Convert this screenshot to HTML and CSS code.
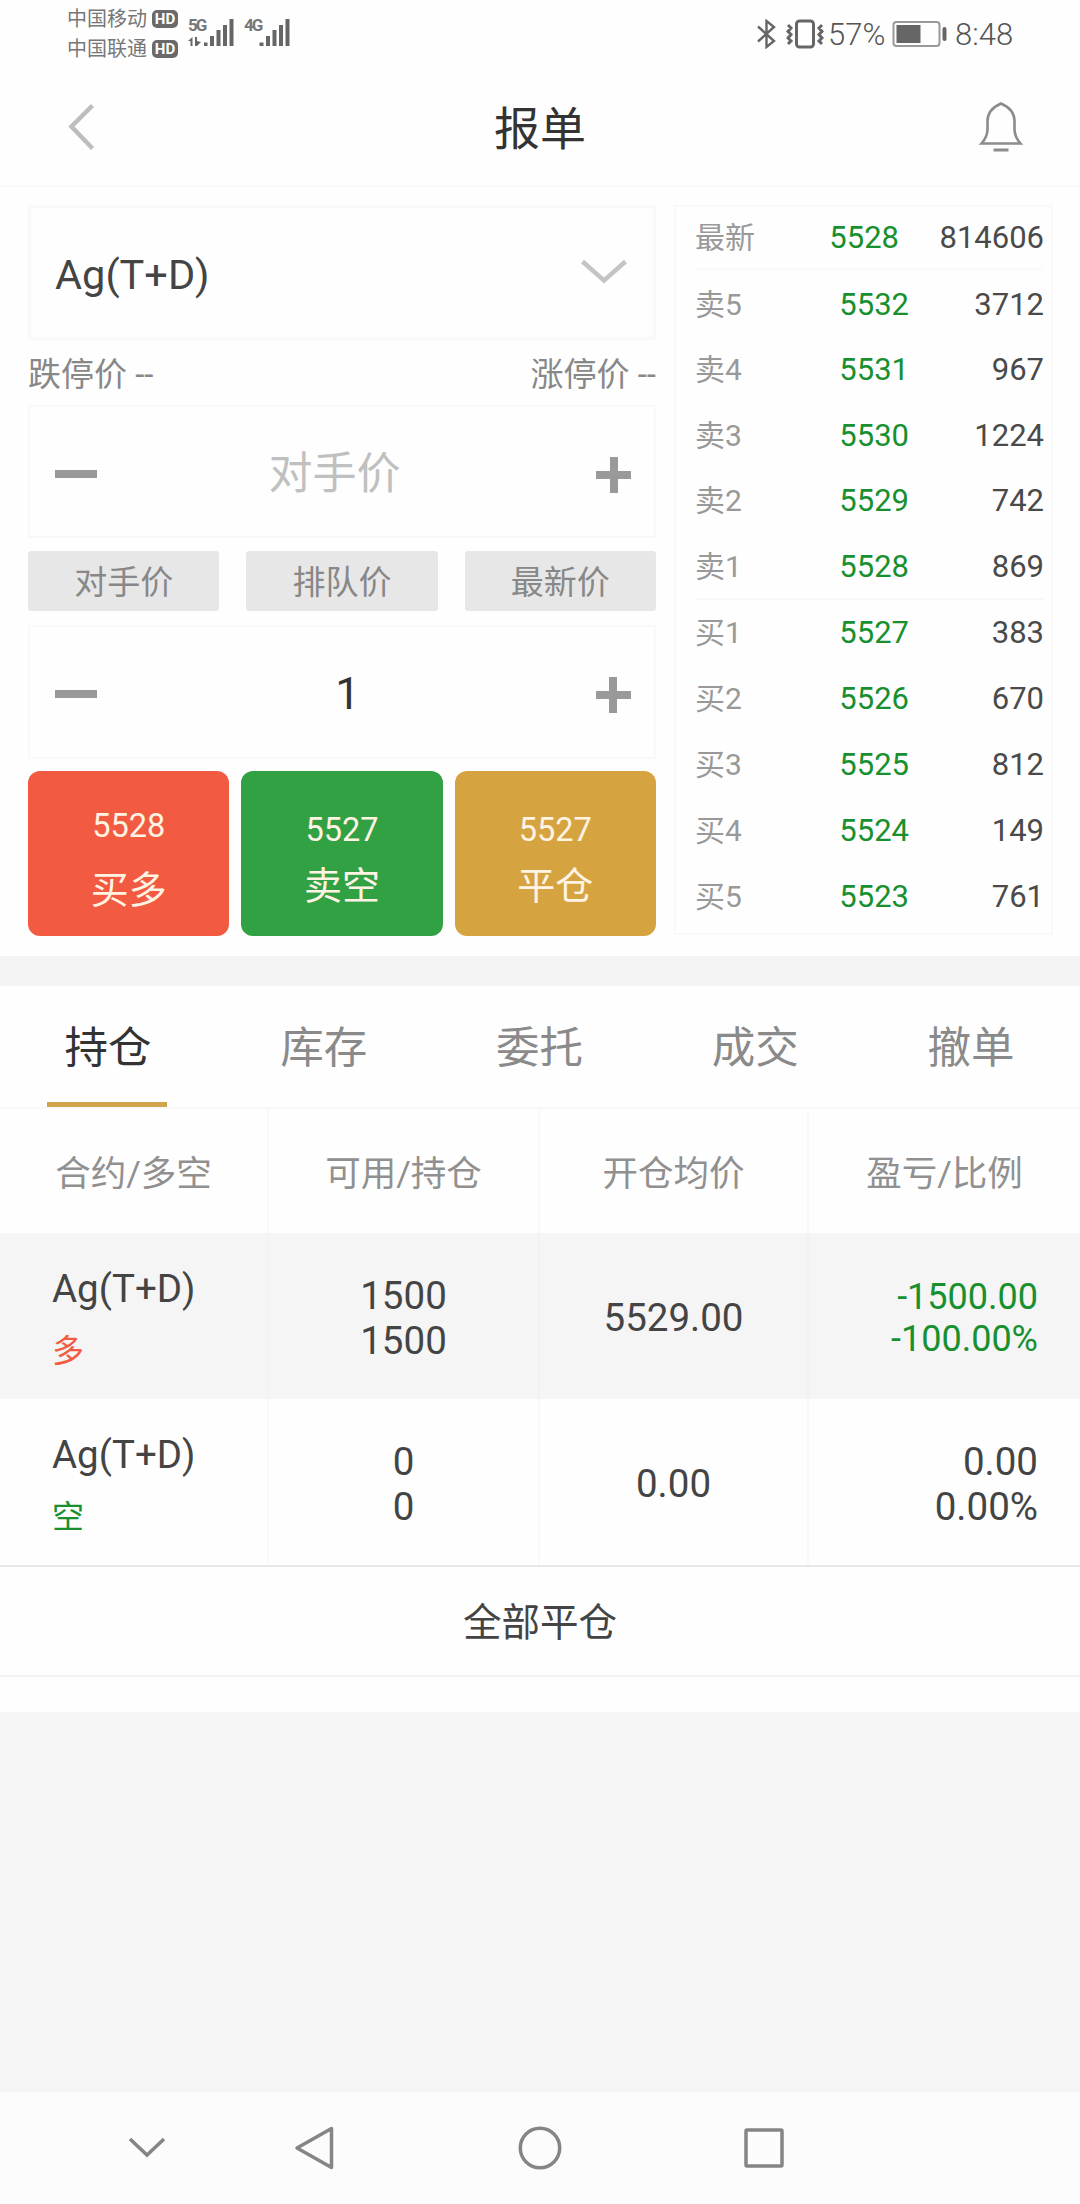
FILE: index.html
```html
<!DOCTYPE html>
<html lang="zh-CN">
<head>
<meta charset="utf-8">
<title>报单</title>
<link rel="stylesheet" href="styles.css">
</head>
<body>
<div class="status">
  <div class="carriers">
    <div class="carrier">中国移动<span class="hd">HD</span></div>
    <div class="carrier">中国联通<span class="hd">HD</span></div>
  </div>
  <div class="net net-5g">
    <span class="gen">5G</span>
    <svg width="46" height="28" viewBox="0 0 46 28" fill="#666"><path d="M0 22l4.500-4v9h-2v-5zM7 18h2v4l4 1-4 4h-2zM16 23.500h3.500v3.500h-3.500zM22 17h4v10h-4zM28.500 11h4v16h-4zM35 6h4v21h-4zM41.500 0h4v27h-4z"/></svg>
  </div>
  <div class="net net-4g">
    <span class="gen">4G</span>
    <svg width="46" height="28" viewBox="0 0 46 28" fill="#666"><path d="M15.500 23.500h4v3.500h-4zM22 17h4v10h-4zM28.500 11h4v16h-4zM35 6h4v21h-4zM41.500 0h4v27h-4z"/></svg>
  </div>
  <div class="status-right">
    <svg class="bt" width="20" height="30" viewBox="0 0 20 30" fill="none" stroke="#666" stroke-width="2.400"><path d="M1 7.500L17 22 9.500 28V2L17 8 1 22.500"/></svg>
    <svg class="vib" width="38" height="30" viewBox="0 0 38 30" fill="none" stroke="#666"><rect x="10.500" y="2" width="17" height="26" rx="3" stroke-width="3"/><path d="M2 6l3 3-3 3.500 3 3-3 3.500 3 3-3 3M36 6l-3 3 3 3.500-3 3 3 3.500-3 3 3 3" stroke-width="3"/></svg>
    <span class="pct">57%</span>
    <svg class="bat" width="56" height="28" viewBox="0 0 56 28"><rect x="1.500" y="2" width="46" height="24" rx="3" fill="none" stroke="#999" stroke-width="2"/><rect x="4.500" y="5" width="24" height="18" fill="#666"/><rect x="50.500" y="7" width="4" height="14" rx="2" fill="#666"/></svg>
    <span class="clock">8:48</span>
  </div>
</div>

<header class="header">
  <svg width="28" height="50" viewBox="0 0 28 50" fill="none" stroke="#bdbdbd" stroke-width="4.500"><path d="M25.500 3.500L4.500 24.500l21 22"/></svg>
  <div class="title">报单</div>
  <svg width="46" height="52" viewBox="0 0 46 52" fill="none" stroke="#8c8c8c" stroke-width="2.600"><path d="M3.500 42.500C7.500 38 9.500 34 9.500 28V20C9.500 11 15 6 23 2.500 31 6 36.500 11 36.500 20V28C36.500 34 38.500 38 42.500 42.500Z"/><path d="M15.500 49h15" stroke-width="3"/></svg>
</header>

<main class="trade">
  <section class="order">
    <div class="select">
      <span>Ag(T+D)</span>
      <svg width="48" height="26" viewBox="0 0 48 26" fill="none" stroke="#c4c4c4" stroke-width="4.500"><path d="M2.500 2.500L24 21.500 45.500 2.500"/></svg>
    </div>
    <div class="limits"><span>跌停价 --</span><span>涨停价 --</span></div>
    <div class="stepper">
      <i class="minus"></i><span class="placeholder">对手价</span><i class="plus"></i>
    </div>
    <div class="modes"><span>对手价</span><span>排队价</span><span>最新价</span></div>
    <div class="stepper qty">
      <i class="minus"></i><span class="value">1</span><i class="plus"></i>
    </div>
    <div class="actions">
      <div class="action buy"><b>5528</b><span>买多</span></div>
      <div class="action sell"><b>5527</b><span>卖空</span></div>
      <div class="action close"><b>5527</b><span>平仓</span></div>
    </div>
  </section>
  <section class="book">
    <div class="quote latest"><span>最新</span><b>5528</b><em>814606</em></div>
    <div class="asks">
      <div class="quote"><span>卖5</span><b>5532</b><em>3712</em></div>
      <div class="quote"><span>卖4</span><b>5531</b><em>967</em></div>
      <div class="quote"><span>卖3</span><b>5530</b><em>1224</em></div>
      <div class="quote"><span>卖2</span><b>5529</b><em>742</em></div>
      <div class="quote"><span>卖1</span><b>5528</b><em>869</em></div>
    </div>
    <div class="bids">
      <div class="quote"><span>买1</span><b>5527</b><em>383</em></div>
      <div class="quote"><span>买2</span><b>5526</b><em>670</em></div>
      <div class="quote"><span>买3</span><b>5525</b><em>812</em></div>
      <div class="quote"><span>买4</span><b>5524</b><em>149</em></div>
      <div class="quote"><span>买5</span><b>5523</b><em>761</em></div>
    </div>
  </section>
</main>

<nav class="tabs">
  <div class="tab active">持仓</div><div class="tab">库存</div><div class="tab">委托</div><div class="tab">成交</div><div class="tab">撤单</div>
</nav>

<section class="positions">
  <div class="row head"><div>合约/多空</div><div>可用/持仓</div><div>开仓均价</div><div>盈亏/比例</div></div>
  <div class="row shaded">
    <div class="contract"><span>Ag(T+D)</span><small class="long">多</small></div>
    <div class="amount"><span>1500</span><span>1500</span></div>
    <div class="price">5529.00</div>
    <div class="profit loss"><span>-1500.00</span><span>-100.00%</span></div>
  </div>
  <div class="row">
    <div class="contract"><span>Ag(T+D)</span><small class="short">空</small></div>
    <div class="amount"><span>0</span><span>0</span></div>
    <div class="price">0.00</div>
    <div class="profit"><span>0.00</span><span>0.00%</span></div>
  </div>
</section>
<div class="close-all">全部平仓</div>
<div class="filler"></div>

<footer class="navbar">
  <svg width="38" height="22" viewBox="0 0 38 22"><path d="M2 2L19 18 36 2"/></svg>
  <svg width="42" height="46" viewBox="0 0 42 46"><path d="M37.500 3.500V42.500L3 23Z" stroke-linejoin="round"/></svg>
  <svg width="46" height="46" viewBox="0 0 46 46"><circle cx="23" cy="23" r="19.700"/></svg>
  <svg width="42" height="42" viewBox="0 0 42 42"><rect x="3" y="3" width="36" height="36" rx="1"/></svg>
</footer>
</body>
</html>
```
FILE: styles.css
```css
* { box-sizing: border-box; }
body {
  margin: 0;
  width: 1080px;
  height: 2204px;
  display: flex;
  flex-direction: column;
  overflow: hidden;
  background: #fefefe;
  color: #444;
  font-family: Roboto, "Noto Sans CJK SC", sans-serif;
}
b, em, i { font-weight: 400; font-style: normal; }
svg { display: block; flex: none; }

/* System status bar */
.status { height: 70px; display: flex; padding-left: 67px; color: #666; }
.carriers { width: 121px; padding-top: 4px; }
.carrier { display: flex; align-items: center; gap: 5px; height: 30px; font-size: 20px; line-height: 30px; color: #777; white-space: nowrap; }
.hd {
  width: 26px; height: 18px; border-radius: 5px; background: #6a6a6a; color: #fff;
  font-size: 15px; font-weight: 700; line-height: 19px; text-align: center;
}
.net { width: 56px; height: 48px; display: grid; padding-top: 17px; }
.net > * { grid-area: 1 / 1; }
.net svg { margin-top: 2px; }
.gen { font-size: 17px; line-height: 17px; font-weight: 700; letter-spacing: -2px; color: #777; }
.status-right { display: flex; align-items: center; height: 67px; margin-left: 457px; }
.bt { margin-right: 9px; }
.pct, .clock { font-size: 31px; line-height: 36px; font-weight: 300; color: #555; padding-top: 2px; }
.pct { width: 62px; margin-left: 4px; }
.bat { margin-left: 2px; margin-right: 7px; }

/* Page header */
.header {
  height: 117px; padding: 0 56px 0 67px; border-bottom: 2px solid #f8f8f8;
  display: flex; align-items: center; justify-content: space-between;
}
.header svg:first-child { margin-top: -2px; }
.header svg:last-child { margin-top: -2px; }
.title { font-size: 46px; line-height: 60px; color: #333; margin-left: 7px; margin-top: 2px; }

/* Order entry and quotes */
.trade { display: flex; height: 769px; padding: 18px 27px 0 28px; gap: 18px; }
.order { width: 628px; }
.select {
  height: 135px; border: 3px solid #f9f9f9; padding: 0 25px 0 24px;
  display: flex; align-items: center; justify-content: space-between;
  font-size: 41.500px; color: #444;
}
.select span { margin-top: 3px; }
.select svg { margin-top: -1px; }
.limits { display: flex; justify-content: space-between; height: 65px; font-size: 33px; line-height: 69px; color: #888; }
.stepper {
  height: 133px; border: 2px solid #f9f9f9; padding: 0 23px 0 25px;
  display: flex; align-items: center; justify-content: space-between;
}
.minus { width: 42px; height: 8px; margin-top: 4px; background: #999; }
.plus {
  width: 35px; height: 36px; margin-top: 6px;
  background: linear-gradient(#999, #999) center / 8px 100% no-repeat, linear-gradient(#999, #999) center / 100% 8px no-repeat;
}
.placeholder { font-size: 44px; line-height: 56px; margin-left: -24px; margin-top: 4px; color: #c0c0c0; }
.value { font-size: 44px; color: #333; margin-left: 2px; margin-top: 3px; }
.modes { display: grid; grid-template-columns: repeat(3, 1fr); gap: 27px; height: 60px; margin-top: 13px; }
.modes span { height: 60px; padding-top: 2px; background: #e7e7e7; border-radius: 3px; font-size: 33px; line-height: 60px; text-align: center; color: #888; }
.qty { margin-top: 14px; height: 134px; }
.actions { display: grid; grid-template-columns: repeat(3, 1fr); gap: 12px; margin-top: 12px; height: 165px; }
.action { border-radius: 12px; color: #fff3e4; display: flex; flex-direction: column; align-items: center; }
.action b { font-size: 32.500px; line-height: 38px; margin-top: 40px; }
.action span { font-size: 38px; line-height: 44px; margin-top: 15px; }
.buy { background: #f25a41; }
.sell { background: #32a144; }
.close { background: #d5a441; }
.action.buy b { margin-top: 36px; }
.action.buy span { margin-top: 23px; }

.book { width: 379px; height: 730px; border: 2px solid #f9f9f9; padding: 0 7px 0 19px; }
.quote { display: grid; grid-template-columns: 78px 136px 1fr; align-items: center; font-size: 31px; color: #4a4a4a; line-height: 40px; }
.quote span { color: #999; font-size: 30px; }
.quote b, .quote em { text-align: right; }
.quote b { color: #18902f; }
.latest { height: 63px; border-bottom: 2px solid #fafafa; grid-template-columns: 78px 126px 1fr; }
.asks { height: 328px; padding-top: 2px; }
.asks .quote { height: 65.500px; }
.bids { border-top: 2px solid #f8f8f8; }
.bids .quote { height: 66.100px; }

/* Section tabs */
.tabs { display: flex; height: 153px; border-top: 30px solid #f4f4f4; border-bottom: 2px solid #f8f7fa; flex: none; }
.tab { width: 215.800px; display: flex; justify-content: center; height: 121px; font-size: 43.500px; line-height: 125px; color: #8a8a8a; }
.active { color: #333; }
.active::after { content: ""; align-self: flex-end; width: 120px; height: 5px; margin-left: -104px; margin-right: -16px; background: #d0a34c; }

/* Positions table */
.row { display: grid; grid-template-columns: 269px 271px 269px 271px; height: 166px; }
.row > div { display: flex; flex-direction: column; justify-content: center; align-items: center; border-right: 2px solid #f9f9f9; font-size: 38.500px; line-height: 45px; }
.row > div:last-child { border-right: 0; }
.head { height: 124px; }
.row.head > div { font-size: 35.500px; color: #909090; padding-top: 6px; }
.shaded { background: #f5f5f5; }
.shaded > div { border-color: #f2f2f2; }
.row > .contract { align-items: flex-start; padding-left: 52px; justify-content: flex-start; padding-top: 33px; }
.contract small { font-size: 32px; line-height: 40px; margin-top: 20px; }
.long { color: #f25a41; }
.short { color: #18902f; }
.row > .price { padding-top: 2px; }
.row > .amount { padding-top: 4px; }
.row > .profit { align-items: flex-end; padding-right: 42px; padding-top: 4px; }
.row > .loss { color: #18902f; font-size: 36px; line-height: 42.500px; padding-top: 4px; }
.close-all {
  height: 112px; border-top: 2px solid #e8e8e8; border-bottom: 2px solid #f2f2f2;
  font-size: 38.500px; line-height: 112px; text-align: center; color: #444; flex: none;
}
.filler { flex: 1; margin-top: 35px; background: #f5f5f5; }

/* System navigation bar */
.navbar { height: 112px; background: #fcfcfc; padding-left: 128px; display: flex; align-items: center; }
.navbar svg { fill: none; stroke: #858585; stroke-width: 3.500; }
.navbar svg:nth-child(2) { margin-left: 128px; }
.navbar svg:nth-child(3) { margin-left: 181px; }
.navbar svg:nth-child(4) { margin-left: 180px; }
```
